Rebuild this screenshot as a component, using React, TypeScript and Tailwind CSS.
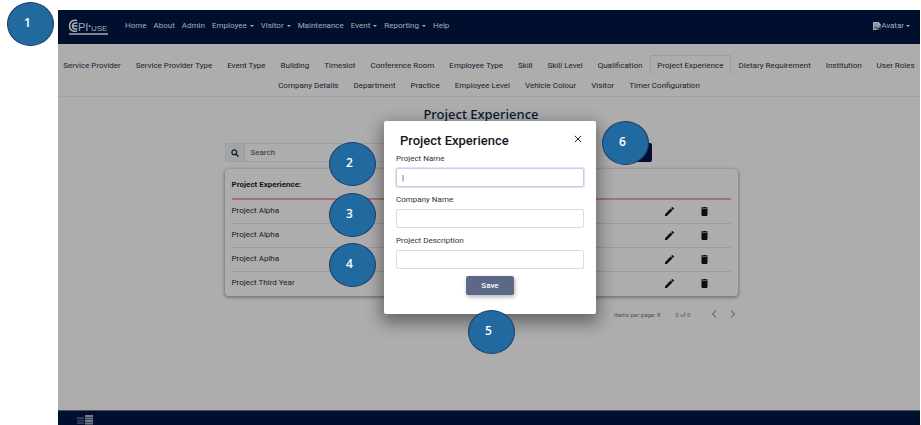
import React from "react";

const menu = [
  { label: "Home" },
  { label: "About" },
  { label: "Admin" },
  { label: "Employee", drop: true },
  { label: "Visitor", drop: true },
  { label: "Maintenance" },
  { label: "Event", drop: true },
  { label: "Reporting", drop: true },
  { label: "Help" },
];

const tabRows = [
  [
    "Service Provider",
    "Service Provider Type",
    "Event Type",
    "Building",
    "Timeslot",
    "Conference Room",
    "Employee Type",
    "Skill",
    "Skill Level",
    "Qualification",
    "Project Experience",
    "Dietary Requirement",
    "Institution",
    "User Roles",
  ],
  [
    "Company Details",
    "Department",
    "Practice",
    "Employee Level",
    "Vehicle Colour",
    "Visitor",
    "Timer Configuration",
  ],
];

const projects = ["Project Alpha", "Project Alpha", "Project Aplha", "Project Third Year"];

const fields = ["Project Name", "Company Name", "Project Description"];

function Caret() {
  return <span className="h-0 w-0 border-x-2 border-t-2 border-x-transparent border-t-[#a9adb5]" />;
}

function Logo() {
  return (
    <svg
      viewBox="0 0 42 18"
      className="h-[18px] w-[42px] font-['Liberation_Sans_Narrow','Liberation_Sans',sans-serif]"
      role="img"
      aria-label="EPI-USE"
    >
      <path d="M9 2.500C4.500 1.500 1.500 4 1.500 8s3 6 7.500 5" fill="none" stroke="#a9adb5" strokeWidth="1.600" />
      <path d="M9.500 5H7.500a3 3 0 0 0 0 6H9.500M5 8H9.500" fill="none" stroke="#a9adb5" strokeWidth="1.500" />
      <text x="10" y="12.500" fontSize="11" fill="#a9adb5">
        PI
      </text>
      <circle cx="21.500" cy="8" r="0.900" fill="#a9adb5" />
      <text x="23" y="12.500" fontSize="8" fill="#a9adb5">
        USE
      </text>
      <path d="M1 16h39" stroke="#a9adb5" strokeWidth="1.500" />
    </svg>
  );
}

function BrokenImage() {
  return (
    <svg viewBox="0 0 8 8" className="h-2 w-2" aria-hidden="true">
      <path d="M0 0h5.500L8 2.500V8H0z" fill="#a3abb5" />
      <path d="M1 1h4v2h2v2L4.500 4.500 3 6 1 5z" fill="#8298b8" />
      <path d="M1 7V5.500L3 4l4 3z" fill="#4d7a4c" />
      <path d="M8 3.500V8H3.500z" fill="#26354f" />
    </svg>
  );
}

function Pencil() {
  return (
    <svg viewBox="3 3 18 18" className="h-[9px] w-[9px]" fill="#0d0d12" aria-hidden="true">
      <path d="M3 17.250V21h3.750L17.810 9.940l-3.750-3.750L3 17.250zM20.710 7.040a1 1 0 0 0 0-1.410l-2.340-2.340a1 1 0 0 0-1.410 0l-1.830 1.830 3.750 3.750 1.830-1.830z" />
    </svg>
  );
}

function Trash() {
  return (
    <svg viewBox="5 3 14 18" className="h-[9px] w-[7px]" fill="#0d0d12" aria-hidden="true">
      <path d="M6 19a2 2 0 0 0 2 2h8a2 2 0 0 0 2-2V7H6v12zM19 4h-3.500l-1-1h-5l-1 1H5v2h14V4z" />
    </svg>
  );
}

function Chevron({ d }: { d: string }) {
  return (
    <svg viewBox="0 0 6 8" className="h-2 w-[6px]" fill="none" stroke="#75757a" strokeWidth="1.200" aria-hidden="true">
      <path d={d} />
    </svg>
  );
}

function Callout({ n, place }: { n: number; place: string }) {
  return (
    <div
      className={`absolute flex h-11 w-[47px] items-center justify-center rounded-[50%] border border-[#1f3a6e] bg-[#216a9f] pr-[6px] pb-[2px] font-['Open_Sans',sans-serif] text-xs font-semibold text-white ${place}`}
    >
      {n}
    </div>
  );
}

export default function App() {
  return (
    <div className="relative bg-white pt-[10px] pr-px pl-[58px] font-[Roboto,sans-serif] text-[8px] text-[#17202f]">
      <div className="flex min-h-[415px] flex-col bg-[#adadad]">
        <header className="flex h-[34px] items-center bg-[#000f2d] pr-[10px] pl-[10px] text-[#a9adb5]">
          <Logo />
          <nav className="ml-[15px] flex flex-1 items-center gap-[7px] pb-[3px]">
            {menu.map((m) => (
              <a key={m.label} href="#" className="flex items-center gap-[3px] whitespace-nowrap">
                {m.label}
                {m.drop && <Caret />}
              </a>
            ))}
          </nav>
          <button type="button" className="flex items-center pb-[3px]">
            <BrokenImage />
            <span className="pr-[2px]">Avatar</span>
            <Caret />
          </button>
        </header>

        <nav className="border-b border-[#a1a1a3] pt-[11px]">
          {tabRows.map((row, r) => (
            <div key={r} className="flex justify-center gap-px">
              {row.map((t) => (
                <a
                  key={t}
                  href="#"
                  className={`flex items-center rounded-t-xs border border-b-0 px-[6px] whitespace-nowrap ${
                    r === 0 ? "h-5" : "h-[21px]"
                  } ${t === "Project Experience" ? "border-[#9d9da0]" : "border-transparent"}`}
                >
                  {t}
                </a>
              ))}
            </div>
          ))}
        </nav>

        <main className="flex flex-1 flex-col">
          <h1 className="mt-[7px] pr-4 text-center font-['Noto_Sans',sans-serif] text-[13px] leading-5 font-medium text-[#0b1730]">
            Project Experience
          </h1>

          <div className="w-full pr-4">
            <div className="mx-auto max-w-[513px]">
              <div className="mt-[19px] flex h-[19px] items-stretch justify-between">
                <div className="flex w-[160px] rounded-xs border border-[#9a9ea5]">
                  <label
                    htmlFor="search"
                    className="flex w-[19px] shrink-0 items-center justify-center border-r border-[#9a9ea5] bg-[#a2a5a8]"
                    aria-label="Search"
                  >
                    <svg viewBox="0 0 8 8" className="h-2 w-2" fill="none" stroke="#111827" strokeWidth="1.300" aria-hidden="true">
                      <circle cx="3.300" cy="3.300" r="2.400" />
                      <path d="M5.200 5.200L7.500 7.500" />
                    </svg>
                  </label>
                  <input
                    id="search"
                    type="text"
                    placeholder="Search"
                    className="w-full min-w-0 bg-transparent px-[6px] outline-none placeholder:text-[#30353d]"
                  />
                </div>
                <button type="button" aria-label="Add" className="mr-[86px] w-6 rounded-xs bg-[#000f2d]" />
              </div>

              <div className="mt-[7px] rounded-sm px-[7px] pt-[3px] pb-px shadow-[0_1px_3px_1px_rgba(0,0,0,0.3)]">
                <table className="w-full border-collapse">
                  <thead>
                    <tr className="h-[27px] border-b-2 border-[#a5707a]">
                      <th className="text-left font-bold text-[#14161c]">Project Experience:</th>
                      <th className="w-9" />
                      <th className="w-[30px]" />
                    </tr>
                  </thead>
                  <tbody>
                    {projects.map((p, i) => (
                      <tr key={i} className="h-6 border-b border-[#999b9c] last:border-b-0">
                        <td>{p}</td>
                        <td>
                          <button type="button" aria-label="Edit" className="block">
                            <Pencil />
                          </button>
                        </td>
                        <td>
                          <button type="button" aria-label="Delete" className="block">
                            <Trash />
                          </button>
                        </td>
                      </tr>
                    ))}
                  </tbody>
                </table>
              </div>

              <div className="mt-3 flex h-3 items-center justify-end pr-[2px] text-[6px] text-[#505258]">
                <span>Items per page: 8</span>
                <span className="ml-[15px]">0 of 0</span>
                <button type="button" aria-label="Previous page" className="ml-5">
                  <Chevron d="M5 0.500L1.500 4L5 7.500" />
                </button>
                <button type="button" aria-label="Next page" className="ml-[13px]">
                  <Chevron d="M1 0.500L4.500 4L1 7.500" />
                </button>
              </div>
            </div>
          </div>
        </main>

        <footer className="h-[15px] border-t border-[#4a4f5a] bg-[#000f2d] pt-1 pl-[18px]">
          <svg viewBox="0 0 18 10" className="h-[10px] w-[18px]" aria-hidden="true">
            <path d="M1 3h7M1 5.500h7M1 8h7" stroke="#303c55" strokeWidth="1.800" />
            <path d="M9 1h8M9 3.500h8M9 6h8M9 8.500h8" stroke="#747b88" strokeWidth="1.900" />
          </svg>
        </footer>
      </div>

      <div
        role="dialog"
        aria-label="Project Experience"
        className="absolute top-[121px] left-[384px] w-[212px] rounded-xs bg-white px-3 pt-[10px] pb-[19px] shadow-[0_6px_16px_3px_rgba(0,0,0,0.4)]"
      >
        <div className="flex items-center justify-between pr-[2px] pb-[2px] pl-1">
          <h2 className="text-[13px] leading-5 font-medium text-[#16181d]">Project Experience</h2>
          <button type="button" aria-label="Close" className="pb-1">
            <svg viewBox="0 0 8 8" className="h-2 w-2" stroke="#2a2540" strokeWidth="1" aria-hidden="true">
              <path d="M0.800 0.800L7.200 7.200M7.200 0.800L0.800 7.200" />
            </svg>
          </button>
        </div>
        <form className="flex flex-col">
          {fields.map((f, i) => (
            <React.Fragment key={f}>
              <label htmlFor={`field-${i}`} className={`leading-3 text-[#30343a] ${i > 0 ? "mt-[7px]" : ""}`}>
                {f}
              </label>
              <input
                id={`field-${i}`}
                type="text"
                defaultValue={i === 0 ? "|" : ""}
                className={`mt-[3px] h-[19px] rounded-xs border px-[5px] outline-none ${
                  i === 0 ? "border-[#c3cfe4] ring-1 ring-[#dfe6f3]" : "border-[#d9dde3]"
                }`}
              />
            </React.Fragment>
          ))}
          <button
            type="button"
            className="mt-[7px] h-[19px] w-12 self-center rounded-xs bg-[#5b6987] font-medium text-white shadow-[1px_2px_4px_rgba(0,0,0,0.3)]"
          >
            Save
          </button>
        </form>
      </div>

      <Callout n={1} place="top-[2px] left-[7px]" />
      <Callout n={2} place="top-[142px] left-[329px]" />
      <Callout n={3} place="top-[193px] left-[329px]" />
      <Callout n={4} place="top-[243px] left-[329px]" />
      <Callout n={5} place="top-[310px] left-[468px]" />
      <Callout n={6} place="top-[121px] left-[602px]" />
    </div>
  );
}
